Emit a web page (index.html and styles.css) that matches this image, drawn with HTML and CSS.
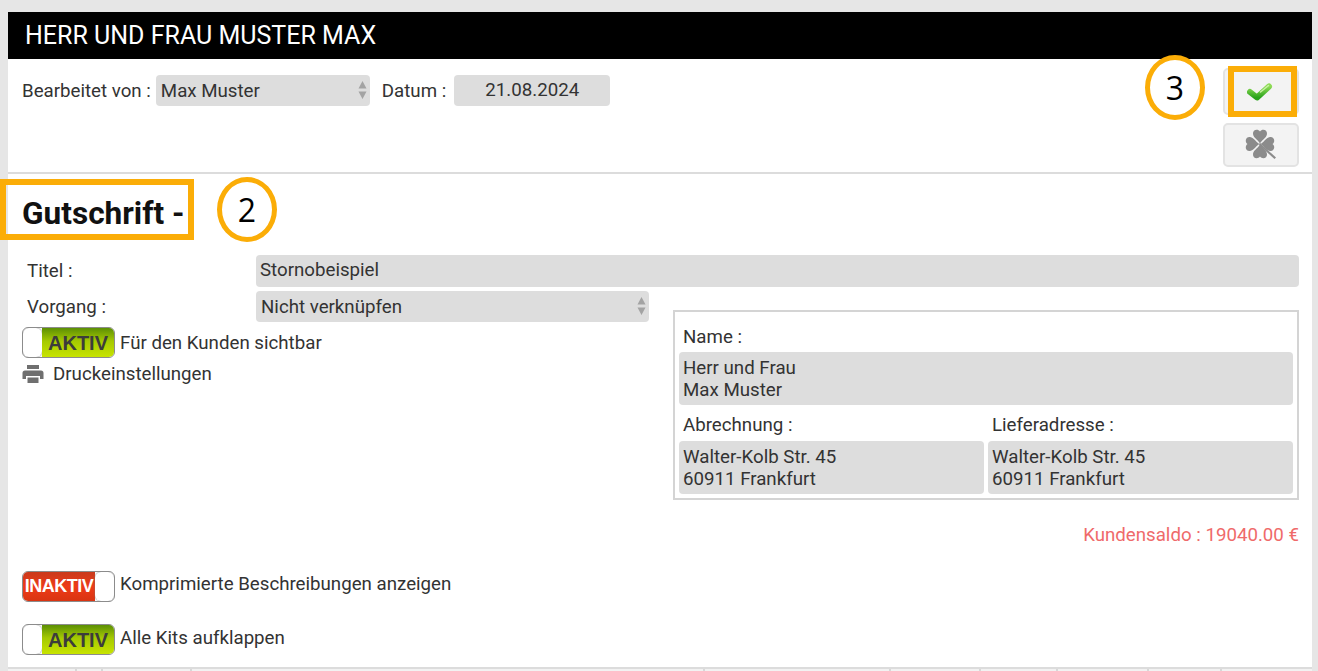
FILE: index.html
```html
<!DOCTYPE html>
<html lang="de">
<head>
    <meta charset="UTF-8">
    <title>Gutschrift - Herr und Frau Muster Max</title>
    <link rel="stylesheet" href="styles.css">
</head>
<body>

    <div class="card">
        <h1 class="card-title">HERR UND FRAU MUSTER MAX</h1>

        <!-- Toolbar -->
        <div class="toolbar">
            <div class="toolbar-fields">
                <span>Bearbeitet von :</span>
                <div class="field select editor-select">Max Muster
                    <svg class="updown" width="9" height="20" viewBox="0 0 9 20"><path d="M4.500 1 8.500 8.500H.5zM4.500 19 .5 11.500h8z"/></svg>
                </div>
                <span class="date-label">Datum :</span>
                <div class="field date-field">21.08.2024</div>
            </div>
            <div class="toolbar-buttons">
                <button class="tool-btn check-btn">
                    <svg width="28" height="22" viewBox="0 0 28 22" fill="none" stroke-linecap="round" stroke-linejoin="round">
                        <defs>
                            <linearGradient id="checkGreen" x1="0" y1="0" x2="0" y2="1">
                                <stop offset="0" stop-color="#8edb55"/>
                                <stop offset="1" stop-color="#2aa31c"/>
                            </linearGradient>
                        </defs>
                        <path d="M3 11 10 16.500 22 5.500" stroke="url(#checkGreen)" stroke-width="6"/>
                        <path d="M13.500 11 21.500 4.500" stroke="#c9f2a5" stroke-width="1.500"/>
                    </svg>
                </button>
                <button class="tool-btn clover-btn">
                    <svg width="34" height="34" viewBox="0 0 34 34" fill="#8b8b8b">
                        <path id="leaf" d="M16 16C15 12 9.500 10.500 9 6 8.500 1.500 14 .5 16 3.500 18 .5 23.500 1.500 23 6 22.500 10.500 17 12 16 16z"/>
                        <use href="#leaf" transform="rotate(90 16 16)"/>
                        <use href="#leaf" transform="rotate(-90 16 16)"/>
                        <use href="#leaf" transform="rotate(180 16 16)"/>
                        <path d="M16 15 32 29.500 30.500 31 15 17z"/>
                    </svg>
                </button>
            </div>
        </div>

        <!-- Document -->
        <div class="doc">
            <h2 class="doc-title">Gutschrift -</h2>

            <div class="row title-row">
                <label class="row-label">Titel :</label>
                <div class="field title-field">Stornobeispiel</div>
            </div>

            <div class="columns">
                <div class="col-left">
                    <div class="row">
                        <label class="row-label">Vorgang :</label>
                        <div class="field select vorgang-select">Nicht verknüpfen
                            <svg class="updown" width="9" height="20" viewBox="0 0 9 20"><path d="M4.500 1 8.500 8.500H.5zM4.500 19 .5 11.500h8z"/></svg>
                        </div>
                    </div>
                    <div class="switch-row first-switch">
                        <div class="switch on"><i class="knob"></i><b>AKTIV</b></div>
                        <span>Für den Kunden sichtbar</span>
                    </div>
                    <div class="print-row">
                        <svg width="22" height="20" viewBox="0 0 22 20" fill="#6f6f6f">
                            <path d="M5 1h12v4H5z"/>
                            <path d="M3 6.500h16a2.500 2.500 0 0 1 2.500 2.500v6H18v-3H4v3H.5V9A2.500 2.500 0 0 1 3 6.500z"/>
                            <path d="M5.500 13.500h11V19h-11z"/>
                        </svg>
                        <span>Druckeinstellungen</span>
                    </div>
                </div>

                <div class="address-box">
                    <div class="box-label">Name :</div>
                    <div class="field multi">Herr und Frau<br>Max Muster</div>
                    <div class="address-cols">
                        <div>
                            <div class="box-label">Abrechnung :</div>
                            <div class="field multi">Walter-Kolb Str. 45<br>60911 Frankfurt</div>
                        </div>
                        <div>
                            <div class="box-label">Lieferadresse :</div>
                            <div class="field multi">Walter-Kolb Str. 45<br>60911 Frankfurt</div>
                        </div>
                    </div>
                </div>
            </div>

            <div class="saldo">Kundensaldo : 19040.00 €</div>

            <div class="switch-row compress-switch">
                <div class="switch off"><b>INAKTIV</b><i class="knob"></i></div>
                <span>Komprimierte Beschreibungen anzeigen</span>
            </div>
            <div class="switch-row kits-switch">
                <div class="switch on"><i class="knob"></i><b>AKTIV</b></div>
                <span>Alle Kits aufklappen</span>
            </div>
        </div>

        <!-- Table head, cut off by the window -->
        <div class="table-head">
            <span style="width:69px"></span>
            <span style="width:26px"></span>
            <span style="width:89px"></span>
            <span style="width:513px"></span>
            <span style="width:186px"></span>
            <span style="width:90px"></span>
            <span style="width:77px"></span>
            <span style="width:91px"></span>
            <span style="width:73px"></span>
        </div>
    </div>

    <!-- Annotations -->
    <div class="mark mark-title"></div>
    <div class="mark mark-check"></div>
    <div class="num num-2">2</div>
    <div class="num num-3">3</div>

</body>
</html>
```
FILE: styles.css
```css
* {
    margin: 0;
    padding: 0;
    box-sizing: border-box;
}

html, body {
    height: 671px;
    overflow: hidden;
}

body {
    font-family: Roboto, Arial, sans-serif;
    font-size: 18.7px;
    color: #333;
    background-color: #e6e6e6;
    padding: 12px 6px 0 8px;
    position: relative;
}

.card {
    background-color: #ffffff;
    height: 659px;
    display: flex;
    flex-direction: column;
}

.card-title {
    background-color: #000;
    color: #fff;
    height: 47px;
    line-height: 48px;
    padding-left: 17px;
    font-size: 25px;
    font-weight: 400;
}

/* Toolbar */
.toolbar {
    height: 115px;
    padding: 9px 13px 0 14px;
    border-bottom: 2px solid #dcdcdc;
    display: flex;
    justify-content: space-between;
}

.toolbar-fields {
    display: flex;
    align-items: center;
    height: 31px;
    margin-top: 7px;
}

.field {
    background-color: #dddddd;
    border-radius: 4px;
}

.select {
    position: relative;
    display: flex;
    align-items: center;
    padding-left: 5px;
}

.updown {
    position: absolute;
    right: 3px;
    top: 5px;
    fill: #a3a3a3;
}

.editor-select {
    width: 214px;
    height: 31px;
    margin-left: 5px;
}

.date-label {
    margin-left: 12px;
}

.date-field {
    width: 156px;
    height: 31px;
    line-height: 31px;
    margin-left: 8px;
    text-align: center;
}

.toolbar-buttons {
    display: flex;
    flex-direction: column;
    gap: 8px;
}

.tool-btn {
    width: 76px;
    background-color: #f3f3f3;
    border: 2px solid #e3e3e3;
    border-radius: 5px;
    display: flex;
    align-items: center;
    justify-content: center;
}

.check-btn {
    height: 47px;
}

.clover-btn {
    height: 44px;
}

/* Document */
.doc {
    flex: 1;
    padding: 0 13px 0 14px;
}

.doc-title {
    font-size: 31.6px;
    font-weight: 700;
    color: #111;
    margin-top: 22px;
    line-height: 36px;
}

.row {
    display: flex;
    align-items: center;
}

.row-label {
    width: 234px;
    padding-left: 5px;
}

.title-row {
    margin-top: 23px;
}

.title-field {
    flex: 1;
    height: 32px;
    line-height: 31px;
    padding-left: 4px;
}

.columns {
    display: flex;
    justify-content: space-between;
    margin-top: 4px;
}

.col-left {
    width: 627px;
}

.vorgang-select {
    width: 393px;
    height: 31px;
}

.switch-row {
    display: flex;
    align-items: center;
    gap: 5px;
}

.first-switch {
    margin-top: 5px;
}

.switch {
    width: 93px;
    height: 31px;
    border: 1px solid #8c8c8c;
    border-radius: 6px;
    display: flex;
    align-items: stretch;
    overflow: hidden;
    font-size: 20px;
    line-height: 30px;
}

.switch b {
    flex: 1;
    text-align: center;
    font-family: "Liberation Sans", Arial, sans-serif;
    font-weight: 700;
}

.knob {
    width: 19px;
    background-color: #fff;
    border-radius: 6px;
    box-shadow: 0 0 2px #777;
}

.switch.on b {
    color: #3c3c3c;
    background: linear-gradient(#5c8f04, #a5c902 45%, #c8e400);
}

.switch.off b {
    color: #fff;
    font-size: 18px;
    line-height: 28px;
    background: linear-gradient(#c93a1c, #ee3b18 50%, #d93412);
    letter-spacing: -0.5px;
}

.print-row {
    display: flex;
    align-items: center;
    gap: 9px;
    margin-top: 6px;
    height: 20px;
}

/* Address box */
.address-box {
    width: 626px;
    height: 190px;
    margin-top: 19px;
    border: 2px solid #d4d4d4;
    padding: 13px 4px 0;
}

.box-label {
    padding-left: 4px;
    line-height: 24px;
    margin-bottom: 3px;
}

.multi {
    height: 53px;
    line-height: 22px;
    padding: 5px 0 0 4px;
}

.address-cols {
    display: grid;
    grid-template-columns: 1fr 1fr;
    gap: 4px;
    margin-top: 8px;
}

.address-cols .box-label {
    margin-bottom: 4px;
}

.saldo {
    text-align: right;
    color: #ef6a6a;
    margin-top: 23px;
    line-height: 24px;
}

.compress-switch {
    margin-top: 24px;
}

.compress-switch span {
    padding-bottom: 6px;
}

.kits-switch {
    margin-top: 22px;
}

.kits-switch span {
    padding-bottom: 4px;
}

.table-head {
    height: 4px;
    border-top: 2px solid #dcdcdc;
    background-color: #f2f2f2;
    display: flex;
    flex: none;
}

.table-head span {
    flex: none;
    border-right: 2px solid #d8d8d8;
}

/* Annotations */
.mark {
    position: absolute;
    border: 6px solid #fbad07;
}

.mark-title {
    left: 0;
    top: 179px;
    width: 194px;
    height: 61px;
}

.mark-check {
    left: 1228px;
    top: 66px;
    width: 69px;
    height: 51px;
}

.num {
    position: absolute;
    border: 5px solid #fbad07;
    border-radius: 50%;
    background-color: #fff;
    color: #000;
    font-family: "Open Sans", Arial, sans-serif;
    font-size: 32px;
    display: flex;
    align-items: center;
    justify-content: center;
}

.num-2 {
    left: 217px;
    top: 177px;
    width: 60px;
    height: 65px;
}

.num-3 {
    left: 1145px;
    top: 55px;
    width: 60px;
    height: 65px;
}
```
